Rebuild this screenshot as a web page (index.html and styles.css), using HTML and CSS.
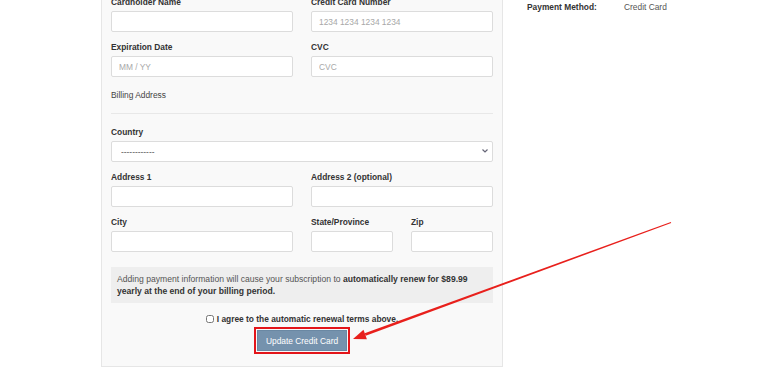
FILE: index.html
```html
<!DOCTYPE html>
<html lang="en">
<head>
    <meta charset="UTF-8">
    <meta name="viewport" content="width=device-width, initial-scale=1.0">
    <title>Update Credit Card</title>
    <link rel="stylesheet" href="styles.css">
</head>
<body>
    <div class="page">
        <form class="card-panel">
            <div class="row two">
                <div class="form-group">
                    <label for="name">Cardholder Name</label>
                    <input type="text" id="name">
                </div>
                <div class="form-group">
                    <label for="number">Credit Card Number</label>
                    <input type="text" id="number" placeholder="1234 1234 1234 1234">
                </div>
            </div>
            <div class="row two">
                <div class="form-group">
                    <label for="exp">Expiration Date</label>
                    <input type="text" id="exp" placeholder="MM / YY">
                </div>
                <div class="form-group">
                    <label for="cvc">CVC</label>
                    <input type="text" id="cvc" placeholder="CVC">
                </div>
            </div>

            <div class="section-title">Billing Address</div>
            <hr>

            <div class="form-group">
                <label for="country">Country</label>
                <div class="select-wrap">
                    <select id="country">
                        <option>------------</option>
                    </select>
                    <svg class="chevron" width="6" height="4" viewBox="0 0 6 4"><path d="M0.5 0.5 L3 3 L5.5 0.5" fill="none" stroke="#667" stroke-width="1.2"/></svg>
                </div>
            </div>
            <div class="row two">
                <div class="form-group">
                    <label for="addr1">Address 1</label>
                    <input type="text" id="addr1">
                </div>
                <div class="form-group">
                    <label for="addr2">Address 2 (optional)</label>
                    <input type="text" id="addr2">
                </div>
            </div>
            <div class="row three">
                <div class="form-group">
                    <label for="city">City</label>
                    <input type="text" id="city">
                </div>
                <div class="form-group">
                    <label for="state">State/Province</label>
                    <input type="text" id="state">
                </div>
                <div class="form-group">
                    <label for="zip">Zip</label>
                    <input type="text" id="zip">
                </div>
            </div>

            <div class="notice">
                Adding payment information will cause your subscription to <strong>automatically renew for $89.99 yearly at the end of your billing period.</strong>
            </div>

            <div class="actions">
                <label class="agree"><input type="checkbox"> I agree to the automatic renewal terms above.</label>
                <button type="button" class="btn-update">Update Credit Card</button>
            </div>
        </form>

        <div class="summary">
            <div class="summary-row">
                <span class="summary-key">Payment Method:</span>
                <span class="summary-val">Credit Card</span>
            </div>
        </div>
    </div>

    <svg class="annotation" width="768" height="376" viewBox="0 0 768 376">
        <polygon points="671.2,223 670.8,222 364.7,333.2 365.7,335.8" fill="#e8201c"/>
        <polygon points="353,339 363.5,329.8 366.9,339.2" fill="#e8201c"/>
    </svg>
</body>
</html>
```

FILE: styles.css
```css
body {
    margin: 0;
    font-family: "Liberation Sans", Arial, sans-serif;
    font-size: 8.4px;
    line-height: 12px;
    color: #333;
    background: #fff;
    position: relative;
    overflow: hidden;
    height: 376px;
}
.page {
    display: flex;
    align-items: flex-start;
    margin-top: -14px;
    padding-left: 101px;
}
.card-panel {
    width: 382px;
    padding: 9px 9px 15px;
    background: #f9f9f9;
    border: 1px solid #e6e6e6;
}
.row {
    display: grid;
    column-gap: 18px;
}
.row.two {
    grid-template-columns: 182px 182px;
}
.row.three {
    grid-template-columns: 182px 82px 82px;
}
.form-group {
    display: flex;
    flex-direction: column;
    min-width: 0;
    margin-bottom: 9px;
}
label {
    font-weight: bold;
    margin-bottom: 3px;
}
input[type="text"], select {
    box-sizing: border-box;
    width: 100%;
    min-width: 0;
    height: 21px;
    padding: 0 7px;
    border: 1px solid #dcdcdc;
    border-radius: 2px;
    background: #fff;
    font-family: inherit;
    font-size: 8.4px;
    color: #555;
    outline: none;
}
input::placeholder {
    color: #a8a8a8;
}
.select-wrap {
    position: relative;
}
select {
    padding-left: 9px;
    appearance: none;
    -webkit-appearance: none;
}
.chevron {
    position: absolute;
    right: 5px;
    top: 8px;
}
.section-title {
    margin-top: 3px;
    color: #444;
}
hr {
    border: 0;
    border-top: 1px solid #e8e8e8;
    margin: 12px 0;
}
.notice {
    margin-top: 6px;
    padding: 6px 12px 6px 6px;
    background: #eee;
    color: #555;
    font-size: 8.6px;
}
.notice strong {
    color: #333;
}
.actions {
    display: flex;
    flex-direction: column;
    align-items: center;
    margin-top: 10px;
}
.agree {
    display: flex;
    align-items: center;
    margin: 0;
    gap: 3px;
}
.agree input {
    width: 8px;
    height: 8px;
    margin: 0;
}
.btn-update {
    margin-top: 5px;
    height: 21px;
    padding: 0 8px;
    border: 1px solid #6a88a3;
    background: #7592ad;
    color: #fff;
    font-family: inherit;
    font-size: 8.4px;
    outline: 2px solid #e3151a;
    outline-offset: 1px;
}
.summary {
    margin-left: 24px;
    padding-top: 15px;
}
.summary-row {
    display: flex;
}
.summary-key {
    width: 97px;
    font-weight: bold;
}
.summary-val {
    color: #555;
}
.annotation {
    position: absolute;
    left: 0;
    top: 0;
    pointer-events: none;
}
```
